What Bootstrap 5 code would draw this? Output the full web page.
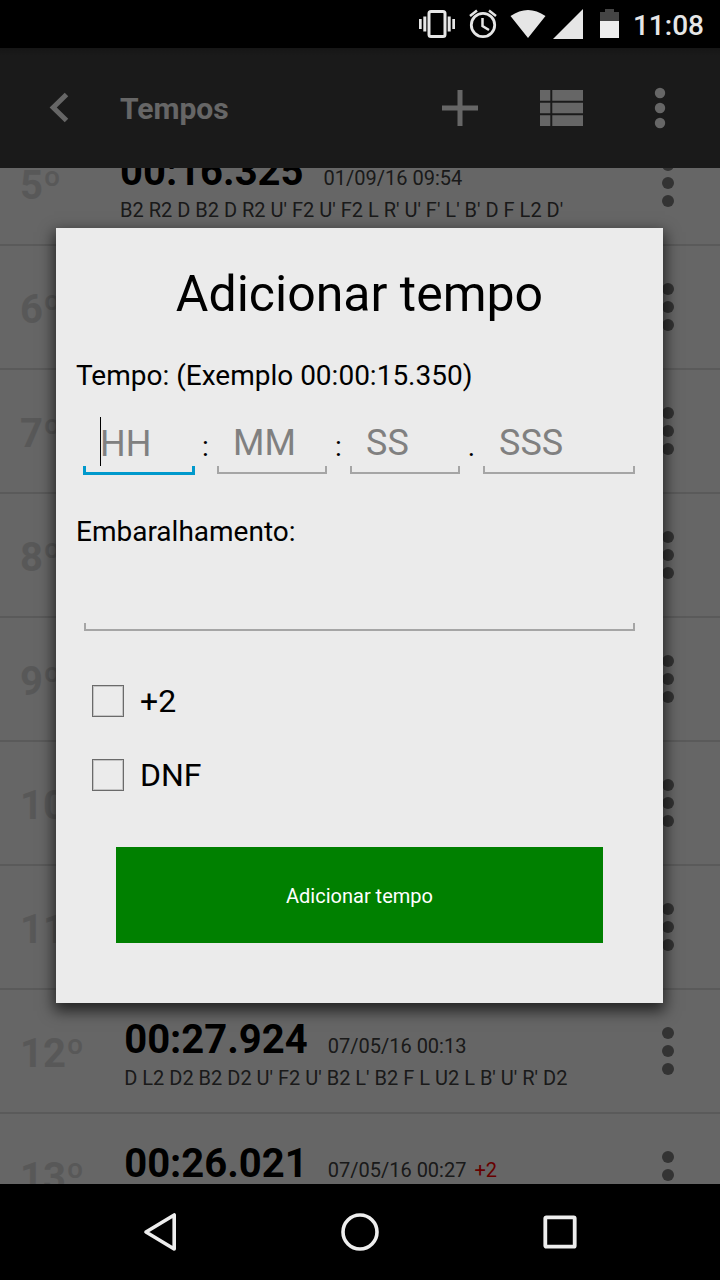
<!DOCTYPE html>
<html lang="pt-BR">
<head>
<meta charset="utf-8">
<meta name="viewport" content="width=device-width, initial-scale=1">
<title>Tempos</title>
<link href="https://cdn.jsdelivr.net/npm/bootstrap@5.3.0/dist/css/bootstrap.min.css" rel="stylesheet">
<style>
  body { font-family: Roboto, "Noto Sans", sans-serif; background: #000; color: #000; }
  svg { display: block; }
  .system-bar { height: 48px; padding-right: 16px; font-size: 28px; line-height: 32px; font-weight: 500; color: #e6e6e6; }
  .system-bar time { padding-top: 3px; }
  .app-bar { height: 120px; background: linear-gradient(#383838, #424242 8px); color: #fff; padding-right: 10px; }
  .app-bar h1 { font-size: 30px; line-height: 36px; font-weight: 700; padding-top: 2px; }
  .bar-btn { width: 100px; height: 100px; }
  .back-btn { width: 120px; height: 100px; }
  .icon-btn { background: none; border: 0; padding: 0; display: flex; align-items: center; justify-content: center; flex-shrink: 0; color: inherit; }
  /* list scrolled part-way through the fifth entry */
  .times { background: #fff; min-height: 0; }
  .times ol { margin-top: -46px; }
  .time-row { height: 124px; border-bottom: 2px solid #e2e2e2; padding-left: 20px; }
  .entry { padding-top: 6px; gap: 40px; }
  .rank { min-width: 60px; font-size: 40px; line-height: 48px; font-weight: 700; color: #dcdcdc; }
  .result { font-size: 40px; line-height: 48px; font-weight: 700; }
  .detail { font-size: 20px; line-height: 28px; color: #424242; }
  .penalty { color: #f00; }
  .row-menu { width: 104px; height: 104px; color: #808080; }
  .scrim { top: 48px; left: 0; right: 0; bottom: 0; background: rgba(0,0,0,.6); }
  .dialog-area { padding-bottom: 1px; }
  .dialog-box { margin: 0 57px 0 56px; padding: 36px 20px 60px; background: #ebebeb; box-shadow: 0 6px 14px 2px rgba(0,0,0,.65); }
  .dialog-box h2 { font-size: 50px; line-height: 60px; font-weight: 400; margin-bottom: 36px; }
  .field-label { font-size: 28px; line-height: 32px; display: block; }
  .fields { margin: 22px 8px 42px; }
  .sep { width: 23px; flex-shrink: 0; font-size: 28px; line-height: 32px; text-align: center; padding-bottom: 11px; }
  .line-input { --ink: #a5a5a5; --w: 2px; min-width: 0; height: 60px; border: 0; border-radius: 0; outline: 0; padding: 8px 16px 10px; font-size: 36px; line-height: 42px; color: #000;
    background: linear-gradient(var(--ink), var(--ink)) bottom / 100% var(--w) no-repeat,
                linear-gradient(var(--ink), var(--ink)) left bottom / var(--w) 8px no-repeat,
                linear-gradient(var(--ink), var(--ink)) right bottom / var(--w) 8px no-repeat; }
  .line-input::placeholder { color: #808080; opacity: 1; }
  .line-input.active { --ink: #0099cc; --w: 3px; margin: 0 -1px -1px; height: 61px; padding-left: 17px;
    background: linear-gradient(var(--ink), var(--ink)) bottom / 100% var(--w) no-repeat,
                linear-gradient(var(--ink), var(--ink)) left bottom / var(--w) 9px no-repeat,
                linear-gradient(var(--ink), var(--ink)) right bottom / var(--w) 9px no-repeat,
                linear-gradient(#000, #000) 17px 3px / 1px 49px no-repeat; }
  .short { flex: 1 1 110px; }
  .short.active { flex-basis: 112px; }
  .long { flex: 1 1 152px; }
  .scramble-field { margin: 23px 8px 33px; }
  .option { height: 74px; padding-left: 16px; gap: 16px; font-size: 32px; line-height: 38px; }
  .option input { appearance: none; width: 32px; height: 32px; margin: 0; border: 1px solid #6a6a6a; box-shadow: inset 0 0 0 1px #c4c4c4; background: transparent; }
  .option input:checked { background: #0099cc; }
  .add-btn { margin: 35px 40px 0; height: 96px; border: 0; padding-top: 3px; background: #008000; color: #fff; font-size: 20px; line-height: 24px; }
  .nav-keys { height: 96px; padding: 0 60px; color: #eee; }
</style>
</head>
<body>
<div class="d-flex flex-column vh-100 overflow-hidden">
  <header class="system-bar d-flex align-items-center justify-content-end flex-shrink-0">
    <svg width="215" height="48" viewBox="418 0 215 48" fill="#e6e6e6" aria-hidden="true">
      <rect x="429" y="11.500" width="16" height="25" rx="2" fill="none" stroke="#e6e6e6" stroke-width="3"/>
      <path d="M419 19h2.700v10H419zM423.300 16.500h3v15h-3zM447.700 16.500h3v15h-3zM452.300 19h2.700v10h-2.700z"/>
      <circle cx="483" cy="25" r="11.700" fill="none" stroke="#e6e6e6" stroke-width="2.800"/>
      <path d="M482.500 18v8l6.500 4M470 16l7-5.500M496 16l-7-5.500" fill="none" stroke="#e6e6e6" stroke-width="2.500"/>
      <path d="M510.500 16Q528 4 545.500 16L528 38zM583 9v30h-30z"/>
      <path d="M600 21v-9h5V9h9v3h5v9z" fill="#444"/>
      <path d="M600 21h19v17h-19z" fill="#eee"/>
    </svg>
    <time>11:08</time>
  </header>

  <nav class="app-bar d-flex align-items-center flex-shrink-0" aria-label="Tempos">
    <button class="icon-btn back-btn" type="button" aria-label="Voltar">
      <svg width="24" height="32" viewBox="48 92 24 32" fill="none" stroke="currentColor" stroke-width="5"><path d="M66.500 94.500 53.200 107.500 66.500 120.500"/></svg>
    </button>
    <h1 class="mb-0 flex-grow-1">Tempos</h1>
    <button class="icon-btn bar-btn" type="button" aria-label="Adicionar">
      <svg width="36" height="36" viewBox="0 0 36 36" fill="currentColor"><path d="M15.500 0h5v15.500H36v5H20.500V36h-5V20.500H0v-5h15.500z"/></svg>
    </button>
    <button class="icon-btn bar-btn" type="button" aria-label="Lista">
      <svg width="46" height="36" viewBox="-3 0 46 36" fill="currentColor"><path d="M0 0h10.300v10.700H0zM12.300 0H43v10.700H12.300zM0 12.700h10.300v10.600H0zM12.300 12.700H43v10.600H12.300zM0 25.300h10.300V36H0zM12.300 25.300H43V36H12.300z"/></svg>
    </button>
    <button class="icon-btn bar-btn" type="button" aria-label="Mais opções">
      <svg width="12" height="42" viewBox="0 0 12 42" fill="currentColor"><circle cx="6" cy="6" r="5.200"/><circle cx="6" cy="21" r="5.200"/><circle cx="6" cy="36" r="5.200"/></svg>
    </button>
  </nav>

  <svg class="d-none"><symbol id="dots" viewBox="0 0 12 48"><circle cx="6" cy="6" r="6"/><circle cx="6" cy="24" r="6"/><circle cx="6" cy="42" r="6"/></symbol></svg>

  <main class="times flex-grow-1 overflow-hidden">
    <ol class="list-unstyled mb-0">
      <li class="time-row d-flex align-items-center"><div class="entry d-flex align-items-center flex-grow-1"><span class="rank">5º</span><div><div class="d-flex align-items-baseline"><span class="result">00:16.325</span><span class="detail ms-3 ps-1">01/09/16 09:54</span></div><div class="detail">B2 R2 D B2 D R2 U' F2 U' F2 L R' U' F' L' B' D F L2 D'</div></div></div><button class="icon-btn row-menu" type="button" aria-label="Opções do 5º"><svg width="12" height="48" fill="currentColor"><use href="#dots"/></svg></button></li>
      <li class="time-row d-flex align-items-center"><div class="entry d-flex align-items-center flex-grow-1"><span class="rank">6º</span></div><button class="icon-btn row-menu" type="button" aria-label="Opções do 6º"><svg width="12" height="48" fill="currentColor"><use href="#dots"/></svg></button></li>
      <li class="time-row d-flex align-items-center"><div class="entry d-flex align-items-center flex-grow-1"><span class="rank">7º</span></div><button class="icon-btn row-menu" type="button" aria-label="Opções do 7º"><svg width="12" height="48" fill="currentColor"><use href="#dots"/></svg></button></li>
      <li class="time-row d-flex align-items-center"><div class="entry d-flex align-items-center flex-grow-1"><span class="rank">8º</span></div><button class="icon-btn row-menu" type="button" aria-label="Opções do 8º"><svg width="12" height="48" fill="currentColor"><use href="#dots"/></svg></button></li>
      <li class="time-row d-flex align-items-center"><div class="entry d-flex align-items-center flex-grow-1"><span class="rank">9º</span></div><button class="icon-btn row-menu" type="button" aria-label="Opções do 9º"><svg width="12" height="48" fill="currentColor"><use href="#dots"/></svg></button></li>
      <li class="time-row d-flex align-items-center"><div class="entry d-flex align-items-center flex-grow-1"><span class="rank">10º</span></div><button class="icon-btn row-menu" type="button" aria-label="Opções do 10º"><svg width="12" height="48" fill="currentColor"><use href="#dots"/></svg></button></li>
      <li class="time-row d-flex align-items-center"><div class="entry d-flex align-items-center flex-grow-1"><span class="rank">11º</span></div><button class="icon-btn row-menu" type="button" aria-label="Opções do 11º"><svg width="12" height="48" fill="currentColor"><use href="#dots"/></svg></button></li>
      <li class="time-row d-flex align-items-center"><div class="entry d-flex align-items-center flex-grow-1"><span class="rank">12º</span><div><div class="d-flex align-items-baseline"><span class="result">00:27.924</span><span class="detail ms-3 ps-1">07/05/16 00:13</span></div><div class="detail">D L2 D2 B2 D2 U' F2 U' B2 L' B2 F L U2 L B' U' R' D2</div></div></div><button class="icon-btn row-menu" type="button" aria-label="Opções do 12º"><svg width="12" height="48" fill="currentColor"><use href="#dots"/></svg></button></li>
      <li class="time-row d-flex align-items-center"><div class="entry d-flex align-items-center flex-grow-1"><span class="rank">13º</span><div><div class="d-flex align-items-baseline"><span class="result">00:26.021</span><span class="detail ms-3 ps-1">07/05/16 00:27</span><span class="detail penalty ms-2">+2</span></div><div class="detail">&nbsp;</div></div></div><button class="icon-btn row-menu" type="button" aria-label="Opções do 13º"><svg width="12" height="48" fill="currentColor"><use href="#dots"/></svg></button></li>
    </ol>
  </main>

  <div class="scrim position-absolute d-flex flex-column">
    <div class="dialog-area flex-grow-1 d-flex flex-column justify-content-center">
      <form class="dialog-box d-flex flex-column" role="dialog" aria-modal="true" aria-labelledby="dialog-title">
        <h2 id="dialog-title" class="text-center">Adicionar tempo</h2>
        <label class="field-label" for="hours">Tempo: (Exemplo 00:00:15.350)</label>
        <div class="fields d-flex align-items-end">
          <input id="hours" class="line-input short active" type="text" inputmode="numeric" placeholder="HH">
          <span class="sep">:</span>
          <input class="line-input short" type="text" inputmode="numeric" placeholder="MM" aria-label="Minutos">
          <span class="sep">:</span>
          <input class="line-input short" type="text" inputmode="numeric" placeholder="SS" aria-label="Segundos">
          <span class="sep">.</span>
          <input class="line-input long" type="text" inputmode="numeric" placeholder="SSS" aria-label="Milissegundos">
        </div>
        <label class="field-label" for="scramble">Embaralhamento:</label>
        <input id="scramble" class="line-input scramble-field" type="text">
        <div class="option d-flex align-items-center"><input id="plus-two" type="checkbox"><label for="plus-two">+2</label></div>
        <div class="option d-flex align-items-center"><input id="dnf" type="checkbox"><label for="dnf">DNF</label></div>
        <button class="add-btn" type="submit">Adicionar tempo</button>
      </form>
    </div>
    <footer class="nav-keys bg-black d-flex justify-content-around align-items-center">
      <button class="icon-btn flex-fill h-100" type="button" aria-label="Voltar"><svg width="40" height="40" viewBox="140 1212 40 40" fill="none" stroke="currentColor" stroke-width="3.600" stroke-linejoin="round"><path d="M174.200 1215v34L146 1232z"/></svg></button>
      <button class="icon-btn flex-fill h-100" type="button" aria-label="Início"><svg width="40" height="40" viewBox="0 0 40 40" fill="none" stroke="currentColor" stroke-width="3.600"><circle cx="20" cy="20" r="17"/></svg></button>
      <button class="icon-btn flex-fill h-100" type="button" aria-label="Recentes"><svg width="40" height="40" viewBox="0 0 40 40" fill="none" stroke="currentColor" stroke-width="3.800"><rect x="5.300" y="5.300" width="29.400" height="29.400" rx="1"/></svg></button>
    </footer>
  </div>
  <div class="nav-keys flex-shrink-0"></div>
</div>
<script src="https://cdn.jsdelivr.net/npm/bootstrap@5.3.0/dist/js/bootstrap.bundle.min.js"></script>
</body>
</html>
